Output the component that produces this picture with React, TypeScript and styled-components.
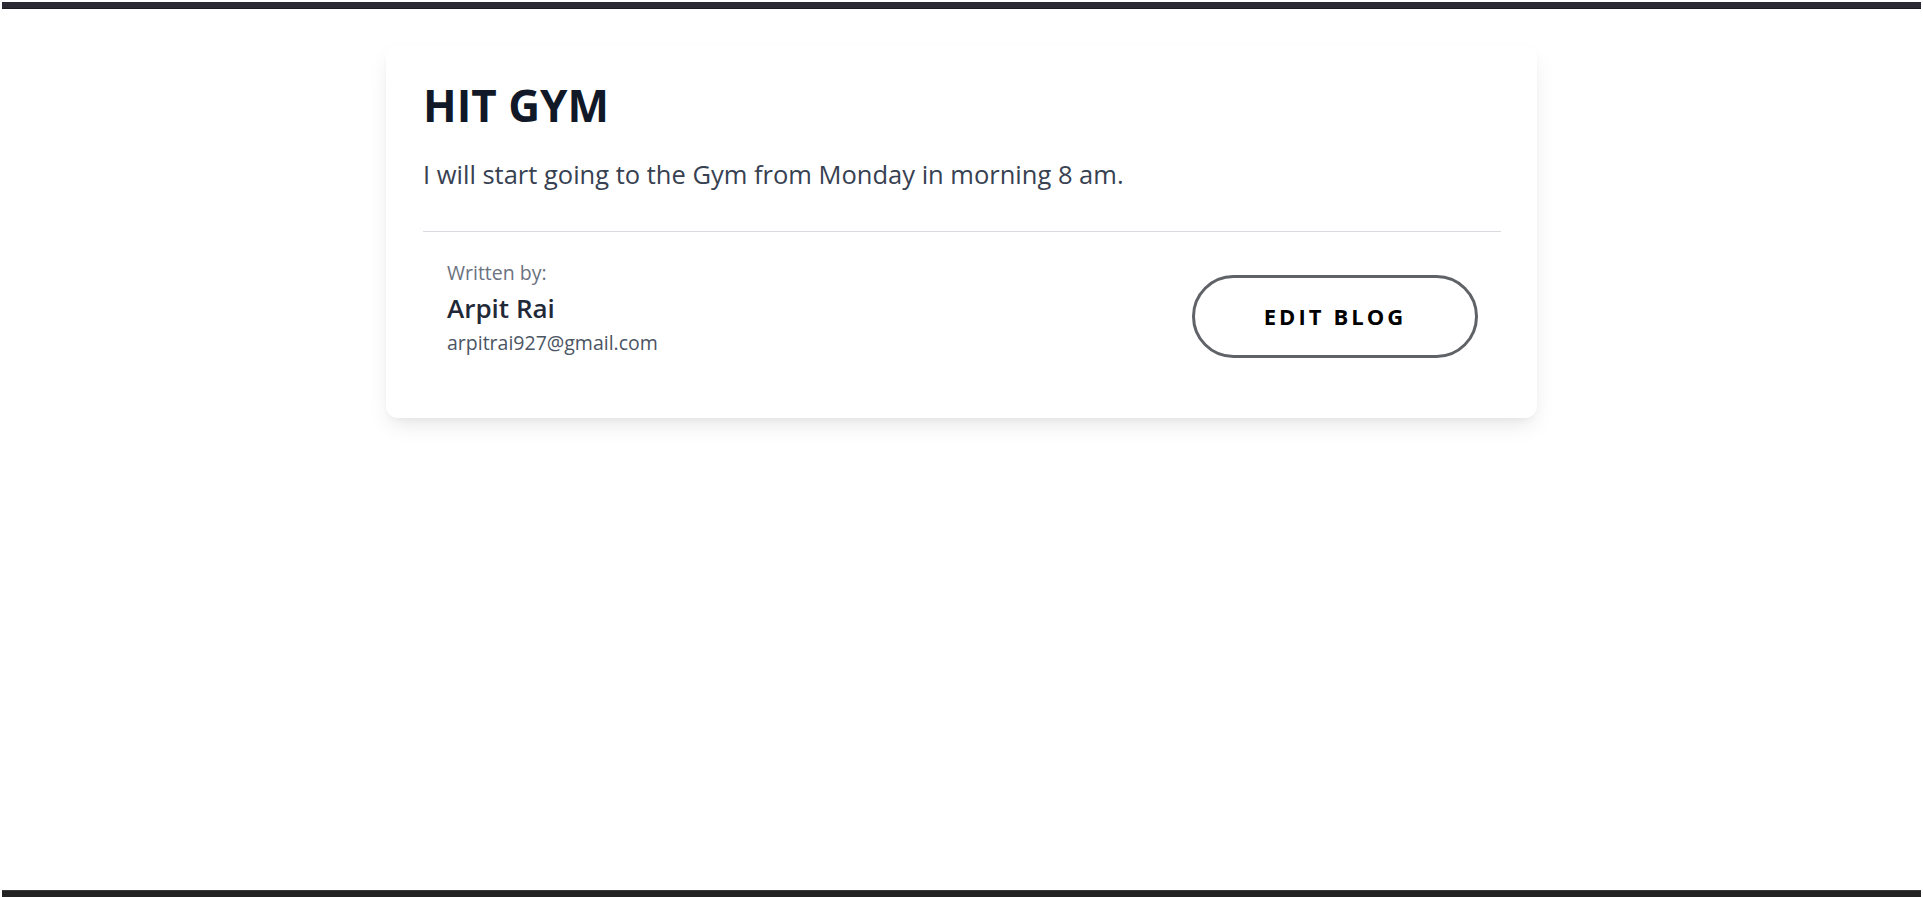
import React from "react";
import styled, { createGlobalStyle } from "styled-components";

const GlobalStyle = createGlobalStyle`
  html, body {
    margin: 0;
    padding: 0;
    background: #ffffff;
  }
  * {
    box-sizing: border-box;
  }
  body {
    font-family: "Open Sans", "Noto Sans", "Liberation Sans", sans-serif;
  }
`;

const blog = {
  title: "HIT GYM",
  content: "I will start going to the Gym from Monday in morning 8 am.",
  author: "Arpit Rai",
  email: "arpitrai927@gmail.com",
};

const App: React.FC = () => {
  return (
    <>
      <GlobalStyle />
      <StyledFrame>
        <div className="top-bar" />
        <main className="page">
          <BlogCard>
            <h1 className="blog-title">{blog.title}</h1>
            <p className="blog-content">{blog.content}</p>
            <div className="blog-footer">
              <div className="author">
                <div className="author-label">Written by:</div>
                <div className="author-name">{blog.author}</div>
                <div className="author-email">{blog.email}</div>
              </div>
              <EditButton>EDIT BLOG</EditButton>
            </div>
          </BlogCard>
        </main>
        <div className="bottom-bar" />
      </StyledFrame>
    </>
  );
};

const StyledFrame = styled.div`
  min-height: 100vh;
  display: flex;
  flex-direction: column;
  padding: 2px 2px 0 2px;

  .top-bar {
    height: 7px;
    background-color: #2b2a33;
    border-bottom: 1px solid #1c1b22;
  }

  .page {
    flex: 1;
    display: flex;
    justify-content: center;
    align-items: flex-start;
    padding-top: 37px;
  }

  .bottom-bar {
    height: 7px;
    background-color: #232323;
    border-top: 1px solid #3a3a3a;
  }
`;

const BlogCard = styled.article`
  width: 1151px;
  background-color: #ffffff;
  border-radius: 12px;
  box-shadow: 0 10px 22px -4px rgba(0, 0, 0, 0.1), 0 4px 8px -4px rgba(0, 0, 0, 0.06);
  padding: 37px 36px 36px 37px;

  .blog-title {
    margin: 0;
    font-size: 44px;
    font-weight: 700;
    line-height: 1;
    color: #111827;
  }

  .blog-content {
    margin: 30px 0 0;
    font-size: 25.5px;
    line-height: 1.4;
    color: #374151;
    padding-bottom: 38px;
    border-bottom: 1px solid #d9dbe0;
  }

  .blog-footer {
    display: flex;
    justify-content: space-between;
    align-items: flex-end;
    padding: 25px 23px 24px 24px;
  }

  .author {
    display: flex;
    flex-direction: column;
  }

  .author-label {
    font-size: 19.5px;
    line-height: 32px;
    color: #6b7280;
  }

  .author-name {
    font-size: 26px;
    font-weight: 600;
    line-height: 38px;
    color: #1f2937;
  }

  .author-email {
    font-size: 19.5px;
    line-height: 31px;
    color: #4b5563;
  }
`;

const EditButton = styled.button`
  width: 286px;
  height: 83px;
  border: 3px solid #5f6266;
  border-radius: 9999px;
  background-color: #ffffff;
  color: #000000;
  font-family: "Open Sans", "Noto Sans", sans-serif;
  font-size: 22px;
  font-weight: 700;
  letter-spacing: 0.14em;
  cursor: pointer;
`;

export default App;
